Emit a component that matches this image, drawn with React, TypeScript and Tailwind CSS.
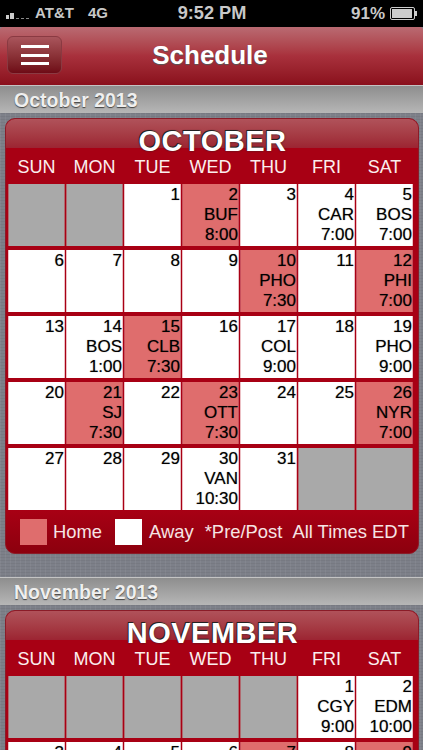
import React from 'react';

type Cell = { d?: number; team?: string; time?: string; home?: boolean };

const DAYS = ['SUN', 'MON', 'TUE', 'WED', 'THU', 'FRI', 'SAT'];

const october: Cell[] = [
  {}, {}, { d: 1 }, { d: 2, team: 'BUF', time: '8:00', home: true }, { d: 3 }, { d: 4, team: 'CAR', time: '7:00' }, { d: 5, team: 'BOS', time: '7:00' },
  { d: 6 }, { d: 7 }, { d: 8 }, { d: 9 }, { d: 10, team: 'PHO', time: '7:30', home: true }, { d: 11 }, { d: 12, team: 'PHI', time: '7:00', home: true },
  { d: 13 }, { d: 14, team: 'BOS', time: '1:00' }, { d: 15, team: 'CLB', time: '7:30', home: true }, { d: 16 }, { d: 17, team: 'COL', time: '9:00' }, { d: 18 }, { d: 19, team: 'PHO', time: '9:00' },
  { d: 20 }, { d: 21, team: 'SJ', time: '7:30', home: true }, { d: 22 }, { d: 23, team: 'OTT', time: '7:30', home: true }, { d: 24 }, { d: 25 }, { d: 26, team: 'NYR', time: '7:00', home: true },
  { d: 27 }, { d: 28 }, { d: 29 }, { d: 30, team: 'VAN', time: '10:30' }, { d: 31 }, {}, {},
];

const november: Cell[] = [
  {}, {}, {}, {}, {}, { d: 1, team: 'CGY', time: '9:00' }, { d: 2, team: 'EDM', time: '10:00' },
  { d: 3 }, { d: 4 }, { d: 5 }, { d: 6 }, { d: 7, home: true }, { d: 8 }, { d: 9, home: true },
];

const DayCell = ({ cell }: { cell: Cell }) => {
  const bg =
    cell.d === undefined
      ? 'bg-[#a9a9a9] border-[#b06a70]'
      : cell.home
        ? 'bg-[#df6d6d] border-[#c8505c]'
        : 'bg-white border-[#ecc0c5]';
  return (
    <div className={`${bg} h-[62px] border-x pt-[1px] text-right text-[17px] leading-[20px] text-black whitespace-nowrap [text-shadow:0_0_1px_rgba(0,0,0,0.45)]`}>
      {cell.d}
      {cell.team && <div>{cell.team}</div>}
      {cell.time && <div>{cell.time}</div>}
    </div>
  );
};

const SectionHeader = ({ title }: { title: string }) => (
  <div className="h-[28px] border-t border-[#c4c4c4] bg-gradient-to-b from-[#8e8e8e] to-[#b6b6b6] pl-[14px] text-[19.5px] font-bold leading-[28px] text-[#efefef] [text-shadow:0_1px_1px_#444]">
    {title}
  </div>
);

const MonthCard = ({ name, cells, legend }: { name: string; cells: Cell[]; legend?: boolean }) => (
  <div className="ml-[5px] mr-[4px] overflow-hidden rounded-[10px] border border-[#8a1c28] bg-[#a80014]">
    <div className="h-[29px] bg-gradient-to-b from-[#b0525a] to-[#9c2432] pl-[1px] text-center text-[29px] font-bold leading-[44px] tracking-[0.5px] text-white [text-shadow:-1px_-1px_0_#222,0_0_2px_#222]">
      {name}
    </div>
    <div className="grid h-[36px] grid-cols-[repeat(7,57px)] gap-x-px pl-[2px] text-center text-[18px] leading-[38px] text-[#fbeeee]">
      {DAYS.map((d) => (
        <div key={d}>{d}</div>
      ))}
    </div>
    <div className="grid grid-cols-[repeat(7,57px)] gap-x-px gap-y-[4px] pl-[2px]">
      {cells.map((c, i) => (
        <DayCell key={i} cell={c} />
      ))}
    </div>
    {legend && (
      <div className="flex h-[43px] items-center bg-gradient-to-b from-[#a80014] to-[#8c000e] pl-[14px] pb-[1px] pt-[2px] text-[18.4px] text-[#f6e4e4] whitespace-nowrap">
        <div className="h-[26px] w-[27px] bg-[#df6d6d]" />
        <span className="ml-[6px]">Home</span>
        <div className="ml-[13px] h-[26px] w-[27px] bg-white" />
        <span className="ml-[7px]">Away</span>
        <span className="ml-[11px]">*Pre/Post</span>
        <span className="ml-[10px]">All Times EDT</span>
      </div>
    )}
  </div>
);

export default function App() {
  return (
    <div className="h-[750px] w-[423px] overflow-hidden bg-[#7d8089] bg-[repeating-linear-gradient(90deg,rgba(255,255,255,0.05)_0px,rgba(255,255,255,0.05)_1px,transparent_1px,transparent_5px),repeating-linear-gradient(0deg,rgba(0,0,0,0.05)_0px,rgba(0,0,0,0.05)_1px,transparent_1px,transparent_3px)] font-['Liberation_Sans',Arial,sans-serif]">
      {/* status bar */}
      <div className="flex h-[27px] items-center justify-between bg-black pl-[6px] pr-[5px] text-[15px] font-bold text-[#c8c8c8]">
        <div className="flex w-[140px] items-center">
          <svg width="29" height="8" viewBox="0 0 29 8" className="mt-[3px]">
            <rect x="0" y="4" width="3" height="4" fill="#ccc" />
            <rect x="4" y="2" width="4" height="6" fill="#ccc" />
            <rect x="10" y="7" width="3" height="1" fill="#888" />
            <rect x="15" y="7" width="3" height="1" fill="#888" />
            <rect x="20" y="7" width="3" height="1" fill="#888" />
          </svg>
          <span>AT&amp;T</span>
          <span className="ml-[14px]">4G</span>
        </div>
        <span className="text-[18.2px]">9:52 PM</span>
        <div className="flex w-[140px] items-center justify-end">
          <span className="text-[17px]">91%</span>
          <svg width="28" height="13" viewBox="0 0 28 13" className="ml-[5px]">
            <rect x="0.5" y="0.5" width="24" height="12" rx="1.5" fill="none" stroke="#ccc" />
            <rect x="2" y="2" width="20" height="9" fill="#ccc" />
            <rect x="25" y="4" width="2" height="5" fill="#ccc" />
          </svg>
        </div>
      </div>

      {/* nav bar */}
      <div className="relative h-[58px] rounded-t-[3px] bg-gradient-to-b from-[#b96a72] via-[#a8303c] to-[#8a0f1c] pr-[3px] text-center text-[26px] font-bold leading-[56px] text-white [text-shadow:0_1px_1px_#555]">
        Schedule
        <button className="absolute left-[7px] top-[9px] flex h-[38px] w-[55px] flex-col items-center justify-center gap-[5.5px] rounded-[6px] border border-[#8a3a42] bg-gradient-to-b from-[#a9555c] to-[#6e0a16]">
          <span className="h-[3px] w-[28px] bg-white" />
          <span className="h-[3px] w-[28px] bg-white" />
          <span className="h-[3px] w-[28px] bg-white" />
        </button>
      </div>

      <SectionHeader title="October 2013" />
      <div className="pt-[5px] pb-[23px]">
        <MonthCard name="OCTOBER" cells={october} legend />
      </div>
      <SectionHeader title="November 2013" />
      <div className="pt-[5px]">
        <MonthCard name="NOVEMBER" cells={november} />
      </div>
    </div>
  );
}
